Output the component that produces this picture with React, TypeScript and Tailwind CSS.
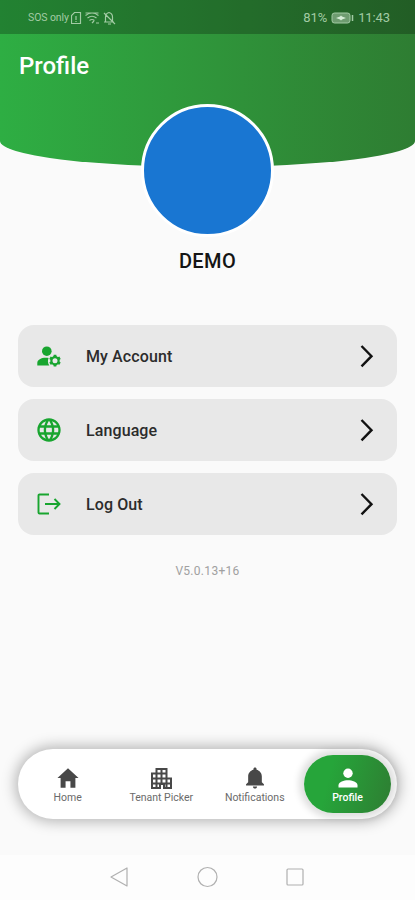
import type { ReactNode } from "react";
import { IoMdHome, IoMdNotifications } from "react-icons/io";
import { MdLanguage } from "react-icons/md";

const AccountIcon = () => (
    <svg width="24" height="21" viewBox="0 0 24 21" fill="currentColor">
        <circle cx="9.800" cy="5.200" r="4.800" />
        <path d="M11.600 12C6 11 .3 13 .3 17v2.500h12a8 8 0 0 1-.7-7.500z" />
        <circle cx="18" cy="14.700" r="3.600" fill="none" stroke="currentColor" strokeWidth="2.200" />
        <path d="M16.700 8.800h2.600l.4 2.400h-3.400zM16.700 20.600h2.600l.4-2.400h-3.400zM12.300 12.900l1.300-2.300 2.400.9-1.600 2.900zM23.700 12.900l-1.300-2.300-2.400.9 1.600 2.900zM12.300 16.500l1.300 2.300 2.400-.9-1.600-2.900zM23.700 16.500l-1.300 2.300-2.400-.9 1.600-2.900z" />
    </svg>
);

const LogOutIcon = () => (
    <svg width="24" height="24" viewBox="0 0 24 24" fill="none" stroke="currentColor" strokeWidth="1.9">
        <path d="M12 2.500H2.500a1 1 0 0 0-1 1v17a1 1 0 0 0 1 1H12M8 12h14.500M17.500 7l5 5-5 5" />
    </svg>
);

const BuildingIcon = () => (
    <svg width="21" height="21" viewBox="0 0 21 21" fill="none" stroke="currentColor" strokeWidth="2">
        <path d="M5.500 5.500V1h10v9.500H20V20h-7v-4H9v4H1V5.500h14.500M5.500 5.500V20M10.500 1v15M15.500 10.500V20M1 10.500h14.500M1 15.500h19" />
    </svg>
);

const PersonIcon = () => (
    <svg width="20" height="20" viewBox="0 0 20 20" fill="currentColor">
        <circle cx="10" cy="5.300" r="4.700" />
        <path d="M.5 19.500v-2.300c0-3.300 5.500-5 9.500-5s9.500 1.700 9.500 5v2.300z" />
    </svg>
);

const menuItems = [
    { label: "My Account", icon: <AccountIcon /> },
    { label: "Language", icon: <MdLanguage size={28} /> },
    { label: "Log Out", icon: <LogOutIcon /> },
];

const tabs = [
    { label: "Home", icon: <IoMdHome size={26} /> },
    { label: "Tenant Picker", icon: <BuildingIcon /> },
    { label: "Notifications", icon: <IoMdNotifications size={26} /> },
];

function MenuRow({ label, icon }: { label: string; icon: ReactNode }) {
    return (
        <button className="flex h-[62px] w-full items-center rounded-[16px] bg-[#e8e8e8] pl-[17px] pr-[22px] text-left">
            <span className="flex w-7 justify-center text-[#18a52f]">{icon}</span>
            <span className="ml-[23px] flex-1 pt-[2px] text-[16px] font-medium tracking-[0.1px] text-[#2c2c2c]">{label}</span>
            <svg width="16" height="24" viewBox="0 0 16 24" fill="none" stroke="#111" strokeWidth="2.400">
                <path d="M2.500 2 12.500 12.200 2.500 22.400" />
            </svg>
        </button>
    );
}

export default function App() {
    return (
        <div className="flex h-[900px] w-[415px] flex-col overflow-hidden bg-[#fafafa] font-['Roboto',sans-serif]">
            <header className="h-[167px] overflow-hidden rounded-b-[50%_26px] bg-linear-to-r from-[#2eae43] to-[#2e7d32]">
                <div className="flex h-[34px] items-center justify-between bg-black/25 pl-7 pr-[25px] pt-px text-[#a2cba4]">
                    <div className="flex items-center">
                        <span className="w-[43px] whitespace-nowrap text-[10.5px] tracking-[-0.1px]">SOS only</span>
                        <svg width="46" height="14" viewBox="0 0 46 14" fill="none" stroke="currentColor" strokeWidth="1.200">
                            <path d="M3.500 1.500h6v11h-9v-8zM5 5v4M5 10v1" />
                            <path d="M14.500 4.500q6.500-5 13 0M16.500 7q4.500-3.500 9 0M18.500 9.500q2.500-2 5 0M14.500 2h13M21 12l2-2M25 12h3" />
                            <path d="M33 11h10M34.500 11V6q0-3.500 3.500-4.500 3.500 1 3.500 4.500v4M37 13h3M33 2l11 11" />
                        </svg>
                    </div>
                    <div className="flex items-center text-[13px] tracking-[-0.1px]">
                        <span>81%</span>
                        <svg className="mx-1" width="23" height="12" viewBox="0 0 23 12">
                            <rect x="1" y="1" width="18" height="10" rx="2.500" fill="#6e9c70" stroke="currentColor" />
                            <path d="M5 6l4-1.500 1-1 1 1L15 6l-4 1.500-1 1-1-1z" fill="#d5ecd6" />
                            <path d="M21.500 3v6" stroke="currentColor" strokeWidth="1.500" />
                        </svg>
                        <span>11:43</span>
                    </div>
                </div>
                <h1 className="ml-[19px] mt-[14px] text-[24px] font-medium leading-9 text-white">Profile</h1>
            </header>

            <div className="relative mx-auto -mt-[63px] size-[133px] shrink-0 rounded-full border-[3px] border-white bg-[#1976d2]" />
            <h2 className="mt-[10px] text-center text-[20px] font-medium leading-7 tracking-[0.4px] text-[#151515]">DEMO</h2>

            <main className="mt-[50px] flex flex-col gap-3 px-[18px]">
                {menuItems.map((item) => (
                    <MenuRow key={item.label} {...item} />
                ))}
            </main>
            <p className="mt-7 text-center text-[12px] leading-4 tracking-[0.3px] text-[#a0a0a0]">V5.0.13+16</p>

            <nav className="mx-[18px] mb-[36px] mt-auto flex h-[70px] shrink-0 items-center rounded-full bg-white pl-[3px] pr-[6px] shadow-[0_0_14px_3px_rgba(0,0,0,0.27)]">
                {tabs.map((tab) => (
                    <button key={tab.label} className="flex w-[93.5px] flex-col items-center pt-0.5 text-[#6a6a6a]">
                        <span className="flex h-[26px] items-center text-[#484848]">{tab.icon}</span>
                        <span className="whitespace-nowrap text-[10.5px] leading-[14px]">{tab.label}</span>
                    </button>
                ))}
                <button className="ml-auto flex h-[58px] w-[87px] flex-col items-center justify-center rounded-full bg-linear-[105deg] from-[#26a53a] from-30% to-[#2e7d32] pt-0.5 text-white shadow-[0_0_7px_5px_rgba(0,0,0,0.13)]">
                    <span className="flex h-[26px] items-center"><PersonIcon /></span>
                    <span className="text-[10.5px] font-medium leading-[14px]">Profile</span>
                </button>
            </nav>

            <footer className="flex h-[45px] shrink-0 items-center justify-center bg-[#fdfdfd] pb-0.5 pr-px text-[#b0b0b0]">
                <svg width="194" height="22" viewBox="0 0 194 22" fill="none" stroke="currentColor" strokeWidth="1.200">
                    <path d="M17 2v18L1 11z" strokeLinejoin="round" />
                    <circle cx="97.500" cy="11" r="9.500" />
                    <rect x="177" y="3" width="16" height="16" rx="1" />
                </svg>
            </footer>
        </div>
    );
}
